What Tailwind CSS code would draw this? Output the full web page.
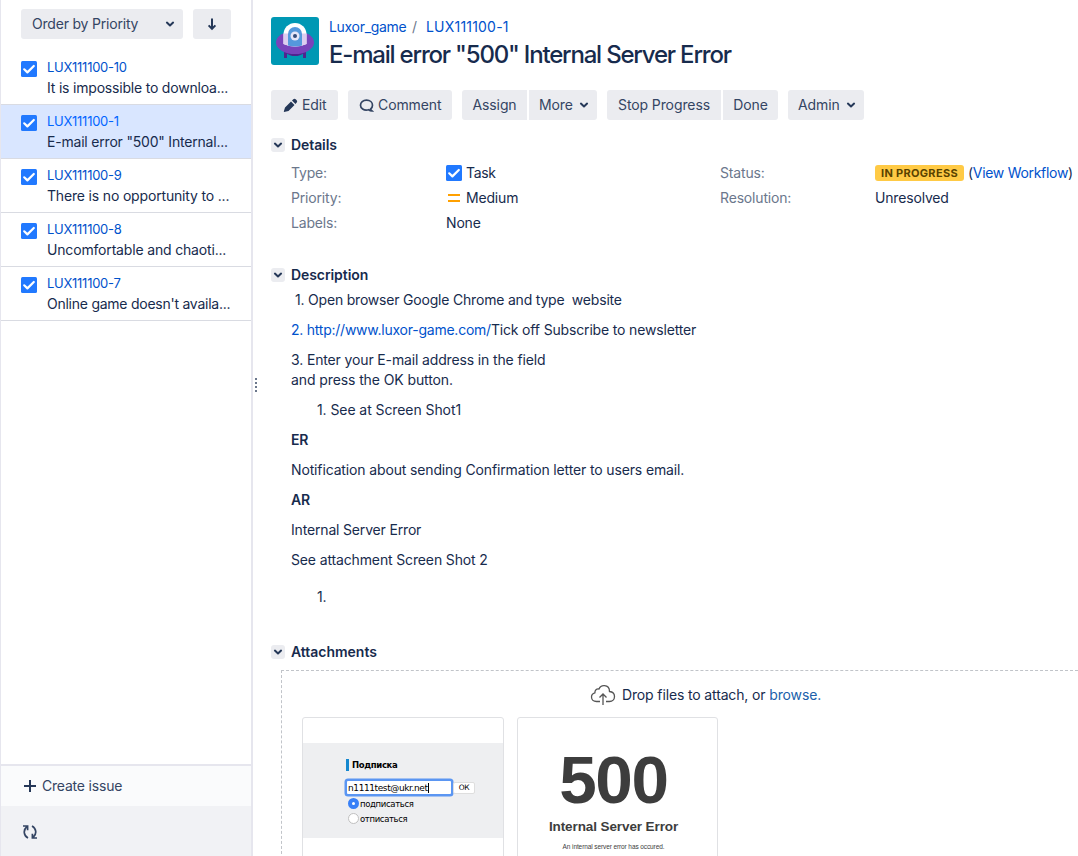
<!DOCTYPE html>
<html lang="en">
<head>
<meta charset="utf-8">
<title>LUX111100-1</title>
<script src="https://cdn.jsdelivr.net/npm/@tailwindcss/browser@4"></script>
</head>
<body class="flex h-[856px] w-[1078px] overflow-hidden bg-white font-['Inter',sans-serif] text-sm leading-5 tracking-[-0.14px] whitespace-nowrap text-[#172b4d]">
<svg class="hidden">
  <symbol id="check" viewBox="0 0 16 16"><rect width="16" height="16" rx="1.5" fill="#2179ff"/><path d="M3.2 8.3 6.4 11.4 12.8 5" fill="none" stroke="#fff" stroke-width="2.2" stroke-linecap="round" stroke-linejoin="round"/></symbol>
  <symbol id="chev" viewBox="0 0 10 10"><path d="M1.9 3.6 5 6.5 8.1 3.6" fill="none" stroke="#253858" stroke-width="2" stroke-linecap="round" stroke-linejoin="round"/></symbol>
</svg>

<aside class="flex w-[253px] shrink-0 flex-col border-r-2 border-l border-[#e6e6ee]">
  <div class="flex h-[51px] gap-2.5 pt-[9px] pl-5 text-[#344563]">
    <button class="flex h-[30px] w-[162px] items-center justify-between rounded-[3px] bg-[#ebecf0] pr-2 pl-[11px]"><span class="tracking-[-0.2px]">Order by Priority</span><svg class="size-2.5"><use href="#chev"/></svg></button>
    <button class="flex h-[30px] w-[38px] items-center justify-center rounded-[3px] bg-[#ebecf0]"><svg class="size-3.5" viewBox="0 0 14 14" fill="none" stroke="#253858" stroke-width="2"><path d="M7 1.5V12M3.6 8.4 7 11.8l3.4-3.4"/></svg></button>
  </div>
  <ul class="flex-1 tracking-[-0.2px]">
    <li class="flex h-[54px] gap-2.5 border-b border-[#d9dbe2] pt-1.5 pl-5"><svg class="mt-1 size-4"><use href="#check"/></svg><div><div class="mb-px text-[13px] tracking-[-0.27px] text-[#0052cc]">LUX111100-10</div><div>It is impossible to downloa...</div></div></li>
    <li class="flex h-[54px] gap-2.5 border-b border-[#d9dbe2] bg-[#d9e6ff] pt-1.5 pl-5"><svg class="mt-1 size-4"><use href="#check"/></svg><div><div class="mb-px text-[13px] tracking-[-0.27px] text-[#0065ff]">LUX111100-1</div><div>E-mail error "500" Internal...</div></div></li>
    <li class="flex h-[54px] gap-2.5 border-b border-[#d9dbe2] pt-1.5 pl-5"><svg class="mt-1 size-4"><use href="#check"/></svg><div><div class="mb-px text-[13px] tracking-[-0.27px] text-[#0052cc]">LUX111100-9</div><div class="tracking-[-0.17px]">There is no opportunity to ...</div></div></li>
    <li class="flex h-[54px] gap-2.5 border-b border-[#d9dbe2] pt-1.5 pl-5"><svg class="mt-1 size-4"><use href="#check"/></svg><div><div class="mb-px text-[13px] tracking-[-0.27px] text-[#0052cc]">LUX111100-8</div><div class="tracking-[-0.17px]">Uncomfortable and chaoti...</div></div></li>
    <li class="flex h-[54px] gap-2.5 border-b border-[#d9dbe2] pt-1.5 pl-5"><svg class="mt-1 size-4"><use href="#check"/></svg><div><div class="mb-px text-[13px] tracking-[-0.27px] text-[#0052cc]">LUX111100-7</div><div class="tracking-[-0.25px]">Online game doesn't availa...</div></div></li>
  </ul>
  <div class="flex h-[42px] items-center gap-1.5 border-t-2 border-[#e6e6ee] bg-[#fafbfc] pl-[23px] text-[#344563]"><svg class="size-3" viewBox="0 0 12 12" stroke="#253858" stroke-width="2"><path d="M6 0v12M0 6h12"/></svg><span class="tracking-[-0.2px]">Create issue</span></div>
  <div class="flex h-[50px] items-center bg-[#f1f2f5] pt-0.5 pl-[22px]"><svg class="size-3.5" viewBox="0 0 14 14" fill="none" stroke="#344563" stroke-width="1.7"><path d="M5 13C.8 10.8-.2 5.200 3.800 1.600M0 1h4.600v4.200M9 1c4.200 2.200 5.200 7.800 1.200 11.400M14 13H9.400V8.800"/></svg></div>
</aside>
<div class="flex w-[18px] shrink-0 flex-col gap-0.5 pt-[378px] pl-0.5"><i class="size-0.5 bg-[#6b778c]"></i><i class="size-0.5 bg-[#6b778c]"></i><i class="size-0.5 bg-[#6b778c]"></i><i class="size-0.5 bg-[#6b778c]"></i></div>

<main class="w-[807px] shrink-0">
  <header class="flex h-[90px] gap-2.5 pt-[17px]">
    <svg class="size-12 shrink-0" viewBox="0 0 48 48"><rect width="48" height="48" rx="3" fill="#0098b4"/><path d="M14.500 34v7M33.500 34v7" stroke="#50248f" stroke-width="3"/><ellipse cx="24" cy="27.500" rx="13" ry="11.500" fill="#50248f"/><ellipse cx="24" cy="25.500" rx="19" ry="11.500" fill="#7843bb"/><path d="M12.500 27V17.500a11.500 11.500 0 0 1 23 0V27q-11.500 5-23 0Z" fill="#fff"/><path d="M12.500 16.500h23V27q-11.500 5-23 0Z" fill="#dccdf0"/><path d="M17 28.500V17a7 7 0 0 1 14 0v11.500q-7 2-14 0Z" fill="#5598dc"/><circle cx="24" cy="19" r="4.500" fill="#e7e5f8"/><circle cx="24" cy="19" r="2" fill="#344b7a"/></svg>
    <div>
      <div class="flex h-5 text-[#0052cc]"><a class="w-[83px] tracking-[-0.3px]">Luxor_game</a><span class="w-[14px] text-[#6b778c]">/</span><a class="tracking-[0.2px]">LUX111100-1</a></div>
      <h1 class="text-2xl leading-9 font-medium tracking-[-1.2px]">E-mail error "500" Internal Server Error</h1>
    </div>
  </header>
  <div class="flex h-[30px] tracking-[-0.1px] text-[#344563]">
    <button class="mr-2.5 flex w-[67px] items-center gap-1 rounded-[3px] bg-[#ebecf0] pl-3"><svg class="size-[15px]" viewBox="0 0 15 15" fill="#253858"><path d="M1 14 .8 13.500 2 9.500 8 3.500 11.500 7l-6 6ZM9 2.500l1.300-1.300q1.200-1 2.400.1l1 1q1 1.200 0 2.300L12.500 6Z"/></svg>Edit</button>
    <button class="mr-2.5 flex w-[104px] items-center gap-1 rounded-[3px] bg-[#ebecf0] pl-[11px]"><svg class="size-[15px]" viewBox="0 0 15 15" fill="none" stroke="#344563" stroke-width="1.700"><path d="M13 13q-2 0-3.300-1.300C4.500 13 1.500 10 1.500 7.200 1.500 4.500 4 2.200 7.500 2.200s6 2.200 6 5c0 1.500-.8 2.800-1.800 3.600q.2 1.300 1.300 2.200Z"/></svg>Comment</button>
    <button class="mr-0.5 w-[65px] rounded-l-[3px] bg-[#ebecf0]">Assign</button>
    <button class="mr-2.5 flex w-[68px] items-center justify-between rounded-r-[3px] bg-[#ebecf0] pr-2 pl-2.5">More<svg class="size-2.5"><use href="#chev"/></svg></button>
    <button class="mr-0.5 w-[114px] rounded-l-[3px] bg-[#ebecf0]">Stop Progress</button>
    <button class="mr-2.5 w-[55px] rounded-r-[3px] bg-[#ebecf0]">Done</button>
    <button class="flex w-[76px] items-center justify-between rounded-[3px] bg-[#ebecf0] pr-2 pl-2.5">Admin<svg class="size-2.5"><use href="#chev"/></svg></button>
  </div>

  <section class="h-[145px] pt-[15px]">
    <h2 class="flex h-5 items-center gap-1.5 font-semibold tracking-[-0.08px]"><span class="flex size-3.5 items-center justify-center rounded-[3px] bg-[#ebecf0]"><svg class="size-2.5"><use href="#chev"/></svg></span>Details</h2>
    <div class="grid grid-cols-[155px_274px_155px_auto] auto-rows-[25px] items-center pt-[5px] pl-5 tracking-[-0.17px]">
      <span class="text-[#6b778c]">Type:</span><span class="flex items-center gap-1 tracking-[-0.3px]"><svg class="size-4"><use href="#check"/></svg>Task</span>
      <span class="text-[#6b778c]">Status:</span><span class="flex items-center gap-1"><b class="flex h-4 w-[89px] items-center justify-center rounded-[3px] bg-[#ffca45] text-[11px] tracking-[0.3px] text-[#594300]">IN PROGRESS</b><span class="tracking-[-0.3px]">(<a class="text-[#0052cc]">View Workflow</a>)</span></span>
      <span class="text-[#6b778c]">Priority:</span><span class="flex items-center gap-1"><svg class="size-4" viewBox="0 0 16 16" fill="#ffa000"><path d="M2 4h12v2H2zM2 10h12v2H2z"/></svg>Medium</span>
      <span class="text-[#6b778c]">Resolution:</span><span>Unresolved</span>
      <span class="text-[#6b778c]">Labels:</span><span>None</span>
    </div>
  </section>

  <section class="h-[377px]">
    <h2 class="flex h-5 items-center gap-1.5 font-semibold tracking-[-0.08px]"><span class="flex size-3.5 items-center justify-center rounded-[3px] bg-[#ebecf0]"><svg class="size-2.5"><use href="#chev"/></svg></span>Description</h2>
    <div class="flex flex-col gap-2.5 pt-[5px] pl-5">
      <p class="pl-1 tracking-[-0.2px]">1. Open browser Google Chrome and type&nbsp; website</p>
      <p class="tracking-[-0.16px]"><a class="tracking-[-0.24px] text-[#0052cc]">2. http://www.luxor-game.com/</a>Tick off Subscribe to newsletter</p>
      <p>3. Enter your E-mail address in the field<br><span class="tracking-[-0.1px]">and press the OK button.</span></p>
      <p class="pl-[26px] tracking-[-0.08px]">1. See at Screen Shot1</p>
      <p class="font-semibold">ER</p>
      <p>Notification about sending Confirmation letter to users email.</p>
      <p class="font-semibold">AR</p>
      <p class="tracking-[-0.17px]">Internal Server Error</p>
      <p>See attachment Screen Shot 2</p>
      <p class="pt-[7px] pl-[26px]">1.</p>
    </div>
  </section>

  <section>
    <h2 class="flex h-5 items-center gap-1.5 font-semibold tracking-[-0.02px]"><span class="flex size-3.5 items-center justify-center rounded-[3px] bg-[#ebecf0]"><svg class="size-2.5"><use href="#chev"/></svg></span>Attachments</h2>
    <div class="mt-2 ml-2.5 h-[184px] w-[797px] border-t border-l border-dashed border-[#c1c4c9] pt-3.5 pl-5">
      <div class="flex h-5 items-center gap-1.5 pl-[288px]"><svg class="size-[26px]" viewBox="0 0 26 26" fill="none" stroke="#555" stroke-width="1.300"><path d="M10 19.500H6.500C3.500 19.500 1.500 17.500 1.500 15c0-2.200 1.300-3.700 3.400-4.200C4.800 8 6.500 6.500 9 7c1-2.500 3-3.500 5.500-3.300 3.500.3 5 2.800 5 5.800 3 .3 5 2.200 5 5s-2 5-5 5H16M13 23V12M9.500 15.500 13 12l3.500 3.500"/></svg><span>Drop files to attach, or <a class="text-[#205faa]">browse.</a></span></div>
      <div class="mt-3 flex gap-[13px]">
        <div class="h-[160px] w-[202px] rounded-[3px] border border-[#e0e1e4] pt-[25px]">
          <div class="h-[95px] bg-[#eeeff1] pt-4 pl-[43px] font-['DejaVu_Sans'] text-[8.500px] leading-3 tracking-[-0.35px] text-black">
            <div class="flex h-3 items-center gap-[3px] font-bold"><i class="h-3 w-[3px] bg-[#1688cf]"></i>Подписка</div>
            <div class="mt-2 -ml-px flex h-[17px] items-center"><span class="flex h-[17px] w-[108px] items-center rounded-[3px] border-2 border-[#5b96f2] bg-white pl-px text-[9px] tracking-[-0.4px] ring-[0.5px] ring-[#5b96f2]">n1111test@ukr.net<i class="h-2.5 w-px bg-black"></i></span><span class="flex h-3 w-[22px] items-center justify-center rounded-[2px] border border-[#dedede] bg-white text-[7.500px]">ОК</span></div>
            <div class="flex h-[15px] items-center gap-px pl-0.5"><i class="size-[11px] rounded-full border-4 border-[#3880f7] bg-white"></i>подписаться</div>
            <div class="flex h-[15px] items-center gap-px pl-0.5"><i class="size-[11px] rounded-full border border-[#c0c0c0] bg-white"></i>отписаться</div>
          </div>
        </div>
        <div class="flex h-[160px] w-[201px] flex-col items-center rounded-[3px] border border-[#e0e1e4] pt-[31px] pr-2 font-['Liberation_Sans'] text-[#3d3d3d]">
          <div class="h-[62px] text-[67.500px] leading-[62px] font-bold tracking-[-1.3px]">500</div>
          <div class="mt-1.5 text-[13.500px] leading-5 font-bold tracking-[-0.1px]">Internal Server Error</div>
          <div class="mt-[3px] text-[6.500px] leading-[14px] tracking-[-0.1px]">An internal server error has occured.</div>
        </div>
      </div>
    </div>
  </section>
</main>
</body>
</html>
